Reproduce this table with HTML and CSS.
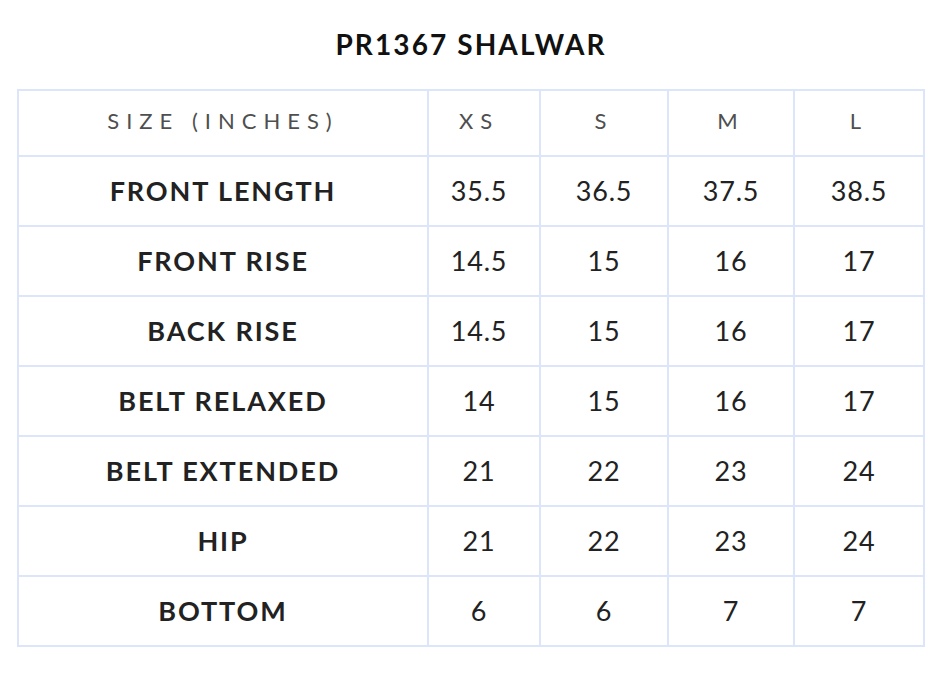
FILE: index.html
```html
<!DOCTYPE html>
<html>
<head>
<meta charset="utf-8">
<link rel="stylesheet" href="styles.css">
</head>
<body>
<div class="page">
  <h1 class="title">PR1367 SHALWAR</h1>
  <table class="chart">
    <colgroup>
      <col class="c1"><col class="c2"><col class="c3"><col class="c4"><col class="c5">
    </colgroup>
    <thead>
      <tr><th>SIZE (INCHES)</th><th class="xs">XS</th><th>S</th><th>M</th><th>L</th></tr>
    </thead>
    <tbody>
      <tr><td class="lbl">FRONT LENGTH</td><td class="xs">35.5</td><td>36.5</td><td>37.5</td><td>38.5</td></tr>
      <tr><td class="lbl">FRONT RISE</td><td class="xs">14.5</td><td>15</td><td>16</td><td>17</td></tr>
      <tr><td class="lbl">BACK RISE</td><td class="xs">14.5</td><td>15</td><td>16</td><td>17</td></tr>
      <tr><td class="lbl">BELT RELAXED</td><td class="xs">14</td><td>15</td><td>16</td><td>17</td></tr>
      <tr><td class="lbl">BELT EXTENDED</td><td class="xs">21</td><td>22</td><td>23</td><td>24</td></tr>
      <tr><td class="lbl">HIP</td><td class="xs">21</td><td>22</td><td>23</td><td>24</td></tr>
      <tr><td class="lbl">BOTTOM</td><td class="xs">6</td><td>6</td><td>7</td><td>7</td></tr>
    </tbody>
  </table>
</div>
</body>
</html>
```
FILE: styles.css
```css
html, body {
  margin: 0;
  padding: 0;
  background: #ffffff;
}
.page {
  padding: 25px 0 0 17px;
  width: 908px;
  font-family: Lato, "Open Sans", sans-serif;
  color: #222222;
}
.title {
  margin: 0 0 26px 0;
  text-align: center;
  font-size: 28px;
  font-weight: 700;
  line-height: 38px;
  letter-spacing: 2.1px;
  color: #111111;
}
.chart {
  border-collapse: collapse;
  table-layout: fixed;
  width: 908px;
}
.c1 { width: 410px; }
.c2 { width: 112px; }
.c3 { width: 128px; }
.c4 { width: 126px; }
.c5 { width: 130px; }
.chart th,
.chart td {
  border: 2px solid #dde5fb;
  text-align: center;
  padding: 0;
}
.chart th {
  height: 59px;
  padding-bottom: 5px;
  font-size: 22px;
  font-weight: 400;
  letter-spacing: 7px;
  color: #4f4f4f;
}
.chart td {
  height: 66px;
  padding-bottom: 2px;
  font-size: 27px;
  font-weight: 400;
  letter-spacing: 0.8px;
  color: #222222;
}
.chart td.lbl {
  font-weight: 700;
  letter-spacing: 1.9px;
}
.chart .xs {
  padding-right: 10px;
}
```
